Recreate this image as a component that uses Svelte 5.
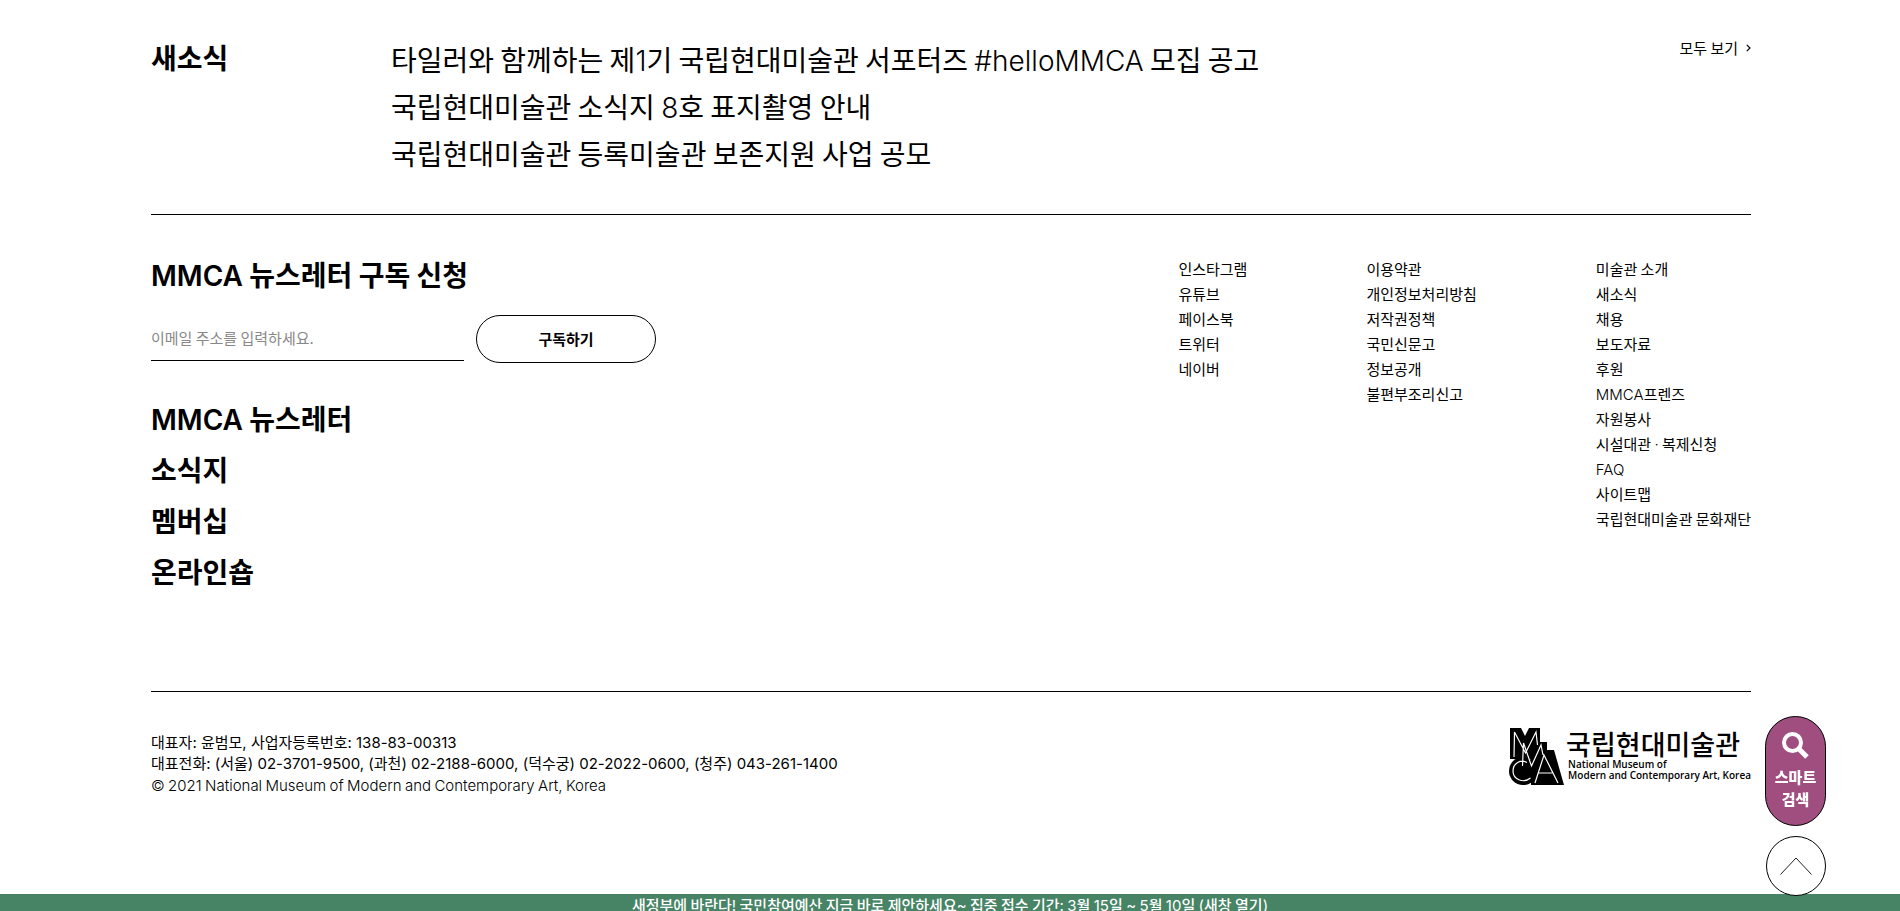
<script>
  const news = [
    '타일러와 함께하는 제1기 국립현대미술관 서포터즈 #helloMMCA 모집 공고',
    '국립현대미술관 소식지 8호 표지촬영 안내',
    '국립현대미술관 등록미술관 보존지원 사업 공모'
  ];
  const services = ['MMCA 뉴스레터', '소식지', '멤버십', '온라인숍'];
  const columns = [
    ['인스타그램', '유튜브', '페이스북', '트위터', '네이버'],
    ['이용약관', '개인정보처리방침', '저작권정책', '국민신문고', '정보공개', '불편부조리신고'],
    ['미술관 소개', '새소식', '채용', '보도자료', '후원', 'MMCA프렌즈', '자원봉사', '시설대관 · 복제신청', 'FAQ', '사이트맵', '국립현대미술관 문화재단']
  ];
  let email = $state('');

  // Latin words and digits are set in their own face beside the Hangul.
  const runs = (text) => text.split(/([A-Za-z0-9#©·,:()!~-]+)/).map((t, i) => ({ t, latin: i % 2 === 1 }));
</script>

{#snippet mixed(text)}{#each runs(text) as run}{#if run.latin}<span class="latin">{run.t}</span>{:else}{run.t}{/if}{/each}{/snippet}

<div class="page">
  <main class="wrap news">
    <h2>새소식</h2>
    <ul>
      {#each news as item}
        <li><a href="#news">{@render mixed(item)}</a></li>
      {/each}
    </ul>
    <a class="more" href="#all">모두 보기
      <svg width="5" height="8" viewBox="0 0 5 8" aria-hidden="true"><path d="M.8.8 4 4 .8 7.200" fill="none" stroke="#000" stroke-width="1.200" /></svg>
    </a>
  </main>

  <footer>
    <div class="wrap top">
      <div class="left">
        <form onsubmit={(e) => e.preventDefault()}>
          <label for="email">{@render mixed('MMCA 뉴스레터 구독 신청')}</label>
          <div class="field">
            <input id="email" type="email" placeholder="이메일 주소를 입력하세요." bind:value={email} />
            <button type="submit">구독하기</button>
          </div>
        </form>
        <ul class="services">
          {#each services as item}
            <li><a href="#service">{@render mixed(item)}</a></li>
          {/each}
        </ul>
      </div>
      <nav>
        {#each columns as column}
          <ul>
            {#each column as item}
              <li><a href="#link">{@render mixed(item)}</a></li>
            {/each}
          </ul>
        {/each}
      </nav>
    </div>
    <div class="wrap bottom">
      <address>
        <p class="contact">대표자: 윤범모, 사업자등록번호: 138-83-00313</p>
        <p class="contact">대표전화: (서울) 02-3701-9500, (과천) 02-2188-6000, (덕수궁) 02-2022-0600, (청주) 043-261-1400</p>
        <p>{@render mixed('© 2021 National Museum of Modern and Contemporary Art, Korea')}</p>
      </address>
      <a class="logo" href="#home">
        <svg width="55" height="57" viewBox="0 0 55 57" aria-hidden="true">
          <path d="M1 0h11l4 8 4-8h11v14h7v8h7l10 35H22V31H1z" />
          <circle cx="14" cy="43" r="14" />
          <path d="M5 29 5.500 4l11 21L27 4l1.500 13M13.500 38 14.500 15l8 23L32 17l2 10M26 55l9-28 14 28M29 45h15M18 34.500C12 31 4 35 4 43c0 8 10 13 17.500 7" fill="none" stroke="#fff" stroke-width="1.200" />
        </svg>
        <span class="name">
          <strong>국립현대미술관</strong>
          <small>National Museum of<br />Modern and Contemporary Art, Korea</small>
        </span>
      </a>
    </div>
  </footer>

  <a class="banner" href="#banner">{@render mixed('새정부에 바란다! 국민참여예산 지금 바로 제안하세요~ 집중 접수 기간: 3월 15일 ~ 5월 10일 (새창 열기)')}</a>

  <aside>
    <a class="smart" href="#search">
      <svg width="27" height="27" viewBox="0 0 27 27" aria-hidden="true"><circle cx="10.500" cy="10.500" r="8.500" fill="none" stroke="#fff" stroke-width="4" /><path d="m17 17 8 8" stroke="#fff" stroke-width="5" /></svg>
      <span>스마트<br />검색</span>
    </a>
    <button class="up" aria-label="맨 위로">
      <svg width="32" height="18" viewBox="0 0 32 18" aria-hidden="true"><path d="M.5 17.500 16 1l15.500 16.500" fill="none" stroke="#222" /></svg>
    </button>
  </aside>
</div>

<style>
  :global(html) { scrollbar-width: none; }
  :global(body) { margin: 0; }
  .page {
    font-family: "Noto Sans CJK KR", sans-serif;
    font-size: 15px;
    line-height: 25px;
    color: #000;
    background: #fff;
  }
  .latin { font-family: Inter, "Noto Sans CJK KR", sans-serif; line-height: 1; font-weight: 300; }
  ul { list-style: none; margin: 0; padding: 0; }
  a { color: inherit; text-decoration: none; }
  .wrap { margin: 0 149px 0 151px; }
  .news {
    display: flex;
    border-bottom: 1px solid #000;
    padding: 36px 0 37px;
  }
  h2 { margin: 0; width: 240px; font-size: 28px; line-height: 42px; font-weight: 700; }
  .news ul { flex: 1; font-size: 28px; line-height: 47px; }
  .more { display: flex; align-items: center; gap: 8px; height: 23px; }
  .top {
    display: flex;
    justify-content: space-between;
    border-bottom: 1px solid #000;
    padding: 41px 0 94px;
  }
  label { display: block; font-size: 28px; line-height: 36px; font-weight: 700; }
  label .latin, .services .latin { font-weight: 600; }
  .field { display: flex; align-items: flex-start; gap: 12px; margin-top: 23px; }
  input {
    width: 313px;
    height: 46px;
    box-sizing: border-box;
    border: 0;
    border-bottom: 1px solid #000;
    padding: 0;
    font: inherit;
    outline: none;
  }
  input::placeholder { color: #888; opacity: 1; }
  .field button {
    width: 180px;
    height: 48px;
    border: 1px solid #000;
    border-radius: 24px;
    background: #fff;
    color: #000;
    font: inherit;
    font-weight: 700;
    padding: 0 0 2px;
  }
  .services { margin-top: 30px; font-size: 28px; line-height: 51px; font-weight: 700; }
  nav { display: flex; gap: 119px; }
  .bottom { display: flex; justify-content: space-between; padding: 36px 0 99px; }
  address { font-style: normal; line-height: 21px; padding-top: 4px; }
  p { margin: 0; }
  .contact { font-family: Inter, "Noto Sans CJK KR", sans-serif; }
  .logo { display: flex; gap: 2px; }
  .name { display: flex; flex-direction: column; }
  strong { font-size: 27px; line-height: 31px; font-weight: 500; }
  small { font-family: "Open Sans", sans-serif; font-size: 10px; line-height: 11px; font-weight: 600; padding-left: 2px; }
  .banner {
    display: block;
    background: #478466;
    color: #fff;
    text-align: center;
    font-weight: 500;
    line-height: 22px;
  }
  .banner .latin { font-weight: 400; }
  aside {
    position: fixed;
    right: 74px;
    bottom: 15px;
    display: flex;
    flex-direction: column;
    gap: 10px;
  }
  .smart {
    display: flex;
    flex-direction: column;
    align-items: center;
    box-sizing: border-box;
    width: 61px;
    height: 110px;
    padding-top: 15px;
    border: 1px solid #000;
    border-radius: 31px;
    background: #a04e80;
    color: #fff;
    text-align: center;
    font-weight: 900;
    line-height: 22px;
  }
  .smart span { margin-top: 7px; }
  .up {
    align-self: flex-end;
    display: flex;
    align-items: center;
    justify-content: center;
    width: 60px;
    height: 60px;
    padding: 0;
    border: 1px solid #000;
    border-radius: 50%;
    background: #fff;
  }
</style>
